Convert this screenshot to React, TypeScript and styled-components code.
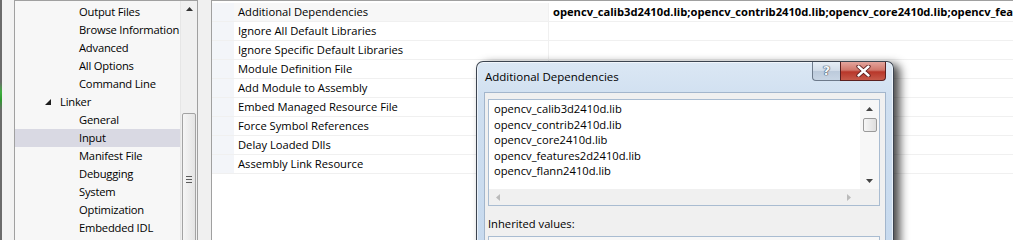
import styled, { createGlobalStyle } from "styled-components";

const GlobalStyle = createGlobalStyle`
  html, body {
    margin: 0;
    padding: 0;
    background: #f0f0f0;
  }
`;

const FONT = `"Segoe UI", "Open Sans", "Noto Sans", sans-serif`;

type TreeItem = { label: string; level: number; expanded?: boolean; selected?: boolean };

const TREE_ITEMS: TreeItem[] = [
  { label: "Output Files", level: 2 },
  { label: "Browse Information", level: 2 },
  { label: "Advanced", level: 2 },
  { label: "All Options", level: 2 },
  { label: "Command Line", level: 2 },
  { label: "Linker", level: 1, expanded: true },
  { label: "General", level: 2 },
  { label: "Input", level: 2, selected: true },
  { label: "Manifest File", level: 2 },
  { label: "Debugging", level: 2 },
  { label: "System", level: 2 },
  { label: "Optimization", level: 2 },
  { label: "Embedded IDL", level: 2 },
];

const PROPERTIES = [
  {
    name: "Additional Dependencies",
    value: "opencv_calib3d2410d.lib;opencv_contrib2410d.lib;opencv_core2410d.lib;opencv_features2d2410d.lib;opencv_flann2410d.lib",
  },
  { name: "Ignore All Default Libraries", value: "" },
  { name: "Ignore Specific Default Libraries", value: "" },
  { name: "Module Definition File", value: "" },
  { name: "Add Module to Assembly", value: "" },
  { name: "Embed Managed Resource File", value: "" },
  { name: "Force Symbol References", value: "" },
  { name: "Delay Loaded Dlls", value: "" },
  { name: "Assembly Link Resource", value: "" },
];

const LIBS = [
  "opencv_calib3d2410d.lib",
  "opencv_contrib2410d.lib",
  "opencv_core2410d.lib",
  "opencv_features2d2410d.lib",
  "opencv_flann2410d.lib",
];

const Arrow = ({ dir, color = "#000" }: { dir: "up" | "down" | "left" | "right"; color?: string }) => {
  const pts = {
    up: "0,4 3.5,0 7,4",
    down: "0,0 7,0 3.5,4",
    left: "4,0 4,7 0,3.5",
    right: "0,0 0,7 4,3.5",
  }[dir];
  const vertical = dir === "up" || dir === "down";
  return (
    <svg width={vertical ? 7 : 4} height={vertical ? 4 : 7} viewBox={vertical ? "0 0 7 4" : "0 0 4 7"}>
      <polygon points={pts} fill={color} />
    </svg>
  );
};

const App = () => {
  return (
    <>
      <GlobalStyle />
      <Page>
        <LeftEdge />
        <TreePanel>
          <TreeList>
            {TREE_ITEMS.map((item) => (
              <TreeRow key={item.label} $level={item.level} $selected={item.selected}>
                {item.expanded && (
                  <Expander>
                    <svg width="6" height="6" viewBox="0 0 6 6">
                      <polygon points="6,0 6,6 0,6" fill="#1e1e1e" />
                    </svg>
                  </Expander>
                )}
                {item.label}
              </TreeRow>
            ))}
          </TreeList>
          <VScroll>
            <ScrollButton>
              <Arrow dir="up" color="#333" />
            </ScrollButton>
            <TreeTrack>
              <TreeThumb>
                <Grip>
                  <span />
                  <span />
                  <span />
                </Grip>
              </TreeThumb>
            </TreeTrack>
          </VScroll>
        </TreePanel>
        <Spacer />
        <PropGrid>
          {PROPERTIES.map((p, i) => (
            <PropRow key={p.name} $first={i === 0}>
              <Margin />
              <PropName>{p.name}</PropName>
              <PropValue>{p.value}</PropValue>
            </PropRow>
          ))}
        </PropGrid>

        <Dialog>
          <TitleBar>
            <Title>Additional Dependencies</Title>
            <Caption>
              <HelpButton>?</HelpButton>
              <CloseButton>
                <svg width="15" height="12" viewBox="0 0 15 12">
                  <path d="M2.5 1.5 L12.5 10.5 M12.5 1.5 L2.5 10.5" stroke="#5a1a1a" strokeWidth="4.2" strokeLinecap="round" />
                  <path d="M2.5 1.5 L12.5 10.5 M12.5 1.5 L2.5 10.5" stroke="#fff" strokeWidth="2.4" strokeLinecap="round" />
                </svg>
              </CloseButton>
            </Caption>
          </TitleBar>
          <Client>
            <ListBox>
              <ListMain>
                <ListText>
                  {LIBS.map((l) => (
                    <div key={l}>{l}</div>
                  ))}
                </ListText>
                <ListVScroll>
                  <SmallArrowBox>
                    <Arrow dir="up" color="#444" />
                  </SmallArrowBox>
                  <ListThumb />
                  <Filler />
                  <SmallArrowBox>
                    <Arrow dir="down" color="#444" />
                  </SmallArrowBox>
                </ListVScroll>
              </ListMain>
              <ListHScroll>
                <Arrow dir="left" color="#bbb" />
                <Arrow dir="right" color="#bbb" />
              </ListHScroll>
            </ListBox>
            <Label>Inherited values:</Label>
            <InheritedBox />
          </Client>
        </Dialog>
      </Page>
    </>
  );
};

const Page = styled.div`
  position: relative;
  display: flex;
  width: 1013px;
  height: 240px;
  overflow: hidden;
  background: #f0f0f0;
  font-family: ${FONT};
  font-size: 11.2px;
  color: #000;
`;

const LeftEdge = styled.div`
  flex: none;
  width: 14px;
  background:
    linear-gradient(to bottom, transparent 82px, #3fae3f 92px, #2f9a2f 100px, transparent 110px) 0 0 / 2px 100% no-repeat,
    linear-gradient(to right, #6b6b6b 0, #6b6b6b 2px, #f2f2f2 2px);
`;

const TreePanel = styled.div`
  flex: none;
  display: flex;
  width: 182px;
  border: 1px solid #a0a0a0;
  border-bottom: none;
  background: #f7f7f7;
`;

const TreeList = styled.div`
  flex: 1;
  padding-top: 2px;
  min-width: 0;
`;

const TreeRow = styled.div<{ $level: number; $selected?: boolean }>`
  position: relative;
  height: 18px;
  line-height: 18px;
  padding-left: ${(p) => (p.$level === 1 ? 45 : 64)}px;
  letter-spacing: -0.2px;
  white-space: nowrap;
  overflow: hidden;
  background: ${(p) => (p.$selected ? "#d9d9e3" : "transparent")};
`;

const Expander = styled.span`
  position: absolute;
  left: 30px;
  top: 6px;
  display: flex;
`;

const VScroll = styled.div`
  flex: none;
  width: 16px;
  display: flex;
  flex-direction: column;
  background: #f0f0f0;
  border-left: 1px solid #e6e6e6;
`;

const ScrollButton = styled.div`
  height: 17px;
  display: flex;
  align-items: center;
  justify-content: center;
  padding-top: 6px;
  box-sizing: border-box;
`;

const TreeTrack = styled.div`
  flex: 1;
  padding-top: 102px;
`;

const TreeThumb = styled.div`
  height: 140px;
  margin: 0 1px;
  border: 1px solid #a3a3a3;
  border-radius: 2px;
  background: linear-gradient(to right, #f6f6f6, #e4e4e4);
  display: flex;
  justify-content: center;
  padding-top: 62px;
  box-sizing: border-box;
`;

const Grip = styled.div`
  display: flex;
  flex-direction: column;
  gap: 2px;
  span {
    display: block;
    width: 6px;
    height: 1px;
    background: #5c5c5c;
  }
`;

const Spacer = styled.div`
  flex: none;
  width: 13px;
`;

const PropGrid = styled.div`
  flex: 1;
  min-width: 0;
  background: #fff;
  border: 1px solid #a0a0a0;
  border-right: none;
  border-bottom: none;
  padding-top: 2px;
`;

const PropRow = styled.div<{ $first?: boolean }>`
  display: grid;
  grid-template-columns: 22px 315px 1fr;
  height: 19px;
  box-sizing: border-box;
  border-bottom: 1px solid #f0f0f0;
  background: ${(p) => (p.$first ? "#f7f7f7" : "#fff")};
`;

const Margin = styled.div`
  background: #f3f5f9;
`;

const PropName = styled.div`
  padding-left: 4px;
  line-height: 18px;
  white-space: nowrap;
  border-right: 1px solid #f0f0f0;
`;

const PropValue = styled.div`
  padding-left: 4px;
  line-height: 18px;
  font-weight: bold;
  white-space: nowrap;
  overflow: hidden;
  background: #fff;
`;

const Dialog = styled.div`
  position: absolute;
  left: 476px;
  top: 61px;
  width: 418px;
  height: 200px;
  box-sizing: border-box;
  border: 1px solid #3c4450;
  border-bottom: none;
  border-radius: 7px 7px 0 0;
  background: linear-gradient(to bottom, #dbe7f4 0, #cfdff0 40px, #c6d9ee 100%);
  box-shadow: 6px 3px 10px rgba(0, 0, 0, 0.7), inset 0 0 0 1px rgba(255, 255, 255, 0.6);
  display: flex;
  flex-direction: column;
`;

const TitleBar = styled.div`
  flex: none;
  height: 30px;
  display: flex;
  justify-content: space-between;
  align-items: flex-start;
  padding: 0 7px 0 8px;
`;

const Title = styled.div`
  padding-top: 7px;
  font-size: 11.5px;
  color: #000;
`;

const Caption = styled.div`
  display: flex;
`;

const HelpButton = styled.div`
  width: 28px;
  height: 19px;
  box-sizing: border-box;
  border: 1px solid #6d7a8b;
  border-top: none;
  border-right: none;
  border-radius: 0 0 0 4px;
  background: linear-gradient(to bottom, #e6edf5 0, #d0dbe8 50%, #bccadb 51%, #c8d5e4 100%);
  color: #f4f7fb;
  font-family: "DejaVu Sans", sans-serif;
  font-weight: bold;
  font-size: 13px;
  line-height: 18px;
  text-align: center;
  text-shadow: 0 0 1px #3c4a5e, 0 0 1px #3c4a5e, 0 0 1px #3c4a5e;
`;

const CloseButton = styled.div`
  width: 46px;
  height: 19px;
  box-sizing: border-box;
  border: 1px solid #5a2020;
  border-top: none;
  border-radius: 0 0 4px 0;
  background: linear-gradient(to bottom, #e3a59d 0, #d0776b 45%, #b8372a 55%, #c65a4a 100%);
  display: flex;
  align-items: center;
  justify-content: center;
`;

const Client = styled.div`
  flex: 1;
  margin: 0 7px;
  background: #f0f0f0;
  border: 1px solid #a3b6cc;
  border-bottom: none;
  padding: 6px 5px 0 3px;
`;

const ListBox = styled.div`
  border: 1px solid #a9bcd1;
  background: #fff;
  display: flex;
  flex-direction: column;
`;

const ListMain = styled.div`
  display: flex;
  height: 89px;
`;

const ListText = styled.div`
  flex: 1;
  padding: 1px 0 0 5px;
  line-height: 15.5px;
  color: #000;
`;

const ListVScroll = styled.div`
  flex: none;
  width: 19px;
  display: flex;
  flex-direction: column;
  align-items: center;
  background: #f7f7f7;
`;

const SmallArrowBox = styled.div`
  height: 17px;
  display: flex;
  align-items: center;
  justify-content: center;
`;

const ListThumb = styled.div`
  width: 14px;
  height: 14px;
  box-sizing: border-box;
  border: 1px solid #9a9a9a;
  border-radius: 2px;
  background: linear-gradient(to right, #f6f6f6, #dedede);
  margin-top: 1px;
`;

const Filler = styled.div`
  flex: 1;
`;

const ListHScroll = styled.div`
  height: 16px;
  display: flex;
  justify-content: space-between;
  align-items: center;
  padding: 0 28px 0 7px;
  background: #f0f0f0;
`;

const Label = styled.div`
  margin-top: 10px;
  padding-left: 0;
  line-height: 16px;
`;

const InheritedBox = styled.div`
  margin-top: 4px;
  height: 40px;
  border: 1px solid #a9bcd1;
  background: #f7f7f7;
`;

export default App;
